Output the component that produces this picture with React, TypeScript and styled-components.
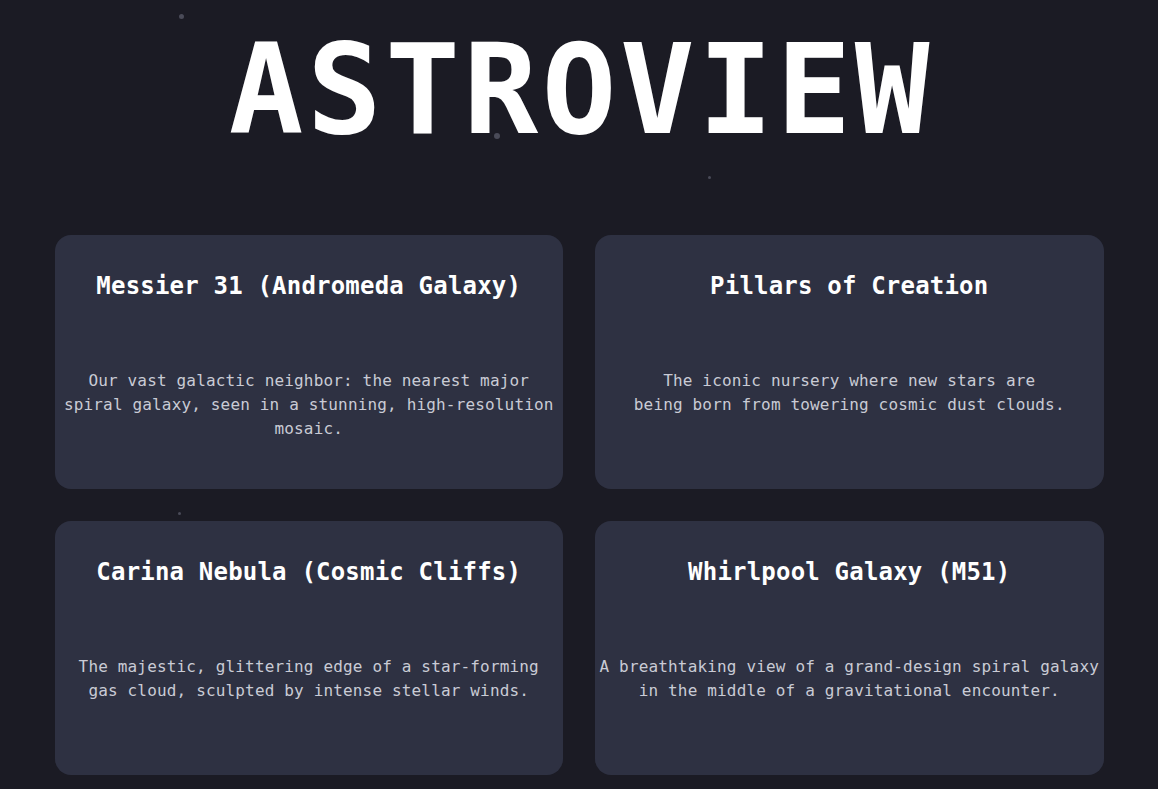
import React from "react";
import styled, { createGlobalStyle } from "styled-components";

const Global = createGlobalStyle`
  html, body {
    margin: 0;
    padding: 0;
    background: #1b1b24;
  }
  body {
    font-family: "DejaVu Sans Mono", "Liberation Mono", monospace;
    color: #ffffff;
    overflow: hidden;
  }
`;

const Page = styled.div`
  position: relative;
  min-height: 789px;
  background: #1b1b24;
  display: flex;
  flex-direction: column;
  align-items: center;
`;

const Star = styled.span<{ $size: number }>`
  position: absolute;
  width: ${(p) => p.$size}px;
  height: ${(p) => p.$size}px;
  border-radius: 50%;
  background: #4a4b58;
`;

const Title = styled.h1`
  margin: 28px 0 0;
  font-family: "DejaVu Sans Mono", monospace;
  font-weight: 700;
  font-size: 124px;
  line-height: 1;
  letter-spacing: 3.6px;
  text-indent: 3.6px;
  color: #ffffff;
  position: relative;
  z-index: 1;
`;

const Grid = styled.div`
  margin-top: 83px;
  width: 1049px;
  display: grid;
  grid-template-columns: 1fr 1fr;
  gap: 32px;
  position: relative;
  z-index: 1;
`;

const Card = styled.article`
  box-sizing: border-box;
  height: 254px;
  background: #2e3142;
  border-radius: 16px;
  padding: 33px 3px 0;
  text-align: center;
`;

const CardTitle = styled.h2`
  margin: 0 0 65px;
  font-size: 24px;
  line-height: 36px;
  font-weight: 700;
  letter-spacing: 0.2px;
  color: #ffffff;
`;

const CardText = styled.p`
  margin: 0;
  font-size: 16px;
  line-height: 24px;
  letter-spacing: 0.16px;
  color: #c9cbd5;
`;

const stars = [
  { x: 179, y: 14, s: 5 },
  { x: 494, y: 133, s: 6 },
  { x: 708, y: 176, s: 3 },
  { x: 178, y: 512, s: 3 },
];

export default function App() {
  return (
    <Page>
      <Global />
      {stars.map((st, i) => (
        <Star key={i} $size={st.s} style={{ left: st.x, top: st.y }} />
      ))}
      <Title>ASTROVIEW</Title>
      <Grid>
        <Card>
          <CardTitle>Messier 31 (Andromeda Galaxy)</CardTitle>
          <CardText>
            Our vast galactic neighbor: the nearest major spiral galaxy, seen in a stunning,
            high-resolution mosaic.
          </CardText>
        </Card>
        <Card>
          <CardTitle>Pillars of Creation</CardTitle>
          <CardText>
            The iconic nursery where new stars are
            <br />
            being born from towering cosmic dust clouds.
          </CardText>
        </Card>
        <Card>
          <CardTitle>Carina Nebula (Cosmic Cliffs)</CardTitle>
          <CardText>
            The majestic, glittering edge of a star-forming
            <br />
            gas cloud, sculpted by intense stellar winds.
          </CardText>
        </Card>
        <Card>
          <CardTitle>Whirlpool Galaxy (M51)</CardTitle>
          <CardText>
            A breathtaking view of a grand-design spiral galaxy in the middle of a
            gravitational encounter.
          </CardText>
        </Card>
      </Grid>
    </Page>
  );
}
